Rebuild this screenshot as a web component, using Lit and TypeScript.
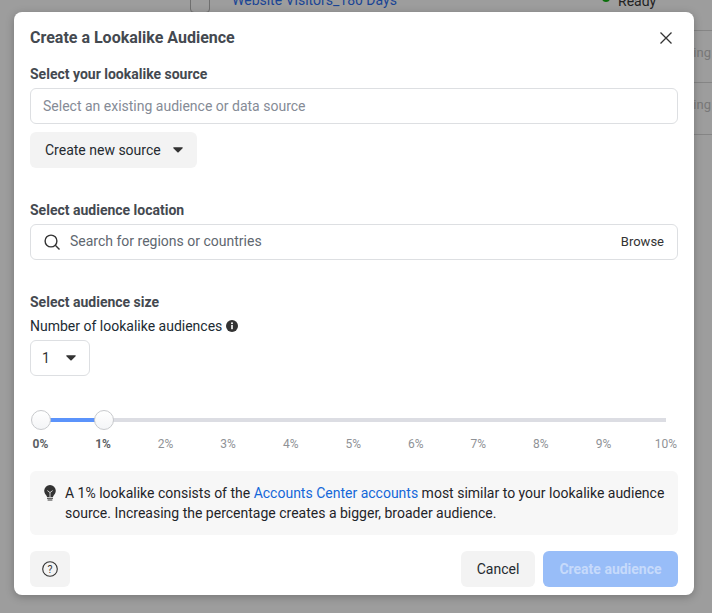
import { LitElement, html, css } from "lit";
import { customElement } from "lit/decorators.js";

const caret = html`<svg class="caret" width="10" height="6" viewBox="0 0 10 6"><path d="M.9.2h8.2c.6 0 .9.7.5 1.1L5.6 5.3c-.3.3-.9.3-1.2 0L.4 1.3C0 .9.3.2.9.2z" fill="#333"/></svg>`;
const ticks = ["0%", "1%", "2%", "3%", "4%", "5%", "6%", "7%", "8%", "9%", "10%"];

@customElement("app-root")
export class AppRoot extends LitElement {
  static styles = css`
    :host { display: block; position: relative; width: 712px; height: 613px; overflow: hidden; background: #9d9d9d; font-family: Roboto, "Liberation Sans", sans-serif; font-size: 14px; color: #1c2b33; }
    .bg { position: absolute; inset: 0; color: #555; }
    .bg .cb { position: absolute; left: 190px; top: -10px; width: 18px; height: 21px; border: 1px solid #6f6f6f; border-radius: 4px; }
    .bg .link { position: absolute; left: 232px; top: -8px; color: #1a4595; font-size: 14px; line-height: 16px; white-space: nowrap; }
    .bg .dot { position: absolute; left: 602px; top: -6px; width: 8px; height: 8px; border-radius: 50%; background: #0a6e0a; }
    .bg .ready { position: absolute; left: 618px; top: -7px; color: #222; line-height: 16px; }
    .bg .line { position: absolute; left: 694px; right: 0; height: 1px; background: #858585; }
    .bg .frag { position: absolute; left: 694px; width: 17px; overflow: hidden; color: #787878; direction: rtl; font-size: 13px; line-height: 16px; }
    .modal { position: absolute; left: 14px; top: 12px; width: 680px; height: 583px; box-sizing: border-box; padding: 0 16px; background: #fff; border-radius: 8px; box-shadow: 0 2px 8px rgba(0,0,0,.25); display: flex; flex-direction: column; }
    .head { height: 52px; flex: none; display: flex; align-items: center; justify-content: space-between; }
    h1 { margin: 0; font-size: 16px; font-weight: 700; color: #444950; line-height: 20px; }
    .close { display: block; margin-right: 6px; }
    h2 { margin: 0; font-size: 14px; font-weight: 700; color: #444950; line-height: 20px; }
    .field { height: 36px; box-sizing: border-box; border: 1px solid #dddfe2; border-radius: 6px; display: flex; align-items: center; background: #fff; color: #4b5563; }
    .src { margin-top: 4px; padding: 0 12px; color: #858b96; }
    .btn { border-radius: 6px; background: #f3f3f3; height: 36px; display: inline-flex; align-items: center; box-sizing: border-box; color: #252a30; }
    .create-src { margin-top: 8px; width: 167px; padding-left: 15px; gap: 12px; }
    .sec2 { margin-top: 32px; }
    .loc { margin-top: 4px; padding: 0 13px 0 12px; }
    .loc .ph { margin-left: 9px; flex: 1; color: #606770; position: relative; top: -1px; }
    .loc .br { color: #333; font-size: 13px; position: relative; top: -1px; }
    .sec3 { margin-top: 32px; }
    .num { margin-top: 4px; line-height: 20px; color: #1c2b33; display: flex; align-items: center; gap: 4px; }
    .btn.sel { margin-top: 4px; width: 60px; padding-left: 11px; gap: 16px; color: #333; background: #fff; }
    .slider { margin-top: 34px; height: 44px; position: relative; }
    .track { position: absolute; left: 10px; right: 12px; top: 8px; height: 4px; background: #dcdde3; }
    .fill { position: absolute; left: 0; top: 0; height: 100%; width: 63px; background: #5b93fb; }
    .thumb { position: absolute; top: 0; width: 20px; height: 20px; box-sizing: border-box; border-radius: 50%; border: 1px solid #c8cacd; background: linear-gradient(#fff, #f4f5f7); }
    .tick { position: absolute; top: 27px; width: 40px; margin-left: -20px; text-align: center; font-size: 12px; line-height: 14px; color: #8f9296; }
    .tick.on { color: #5c5f64; font-weight: 700; }
    .tip { margin-top: 17px; height: 64px; box-sizing: border-box; padding: 12px 12px 0 14px; background: #f7f7f7; border-radius: 6px; display: flex; gap: 9px; line-height: 20px; color: #1f2429; }
    .tip a { color: #1467d9; text-decoration: none; }
    .tip svg { flex: none; margin-top: 2px; }
    .foot { margin-top: 16px; display: flex; align-items: center; gap: 8px; }
    .help { width: 40px; justify-content: center; margin-right: auto; }
    .cancel { width: 74px; justify-content: center; }
    .go { width: 135px; justify-content: center; background: #98bdf8; color: #c6dafb; font-weight: 700; }
  `;

  render() {
    return html`
      <div class="bg">
        <span class="cb"></span>
        <span class="link">Website Visitors_180 Days</span>
        <span class="dot"></span><span class="ready">Ready</span>
        <span class="line" style="top:30px"></span>
        <span class="line" style="top:82px"></span>
        <span class="line" style="top:134px"></span>
        <span class="frag" style="top:45px">ting</span>
        <span class="frag" style="top:97px">ting</span>
      </div>
      <div class="modal">
        <div class="head">
          <h1>Create a Lookalike Audience</h1>
          <svg class="close" width="12" height="12" viewBox="0 0 12 12"><path d="M.5.5l11 11M11.5.5l-11 11" stroke="#333" stroke-width="1.3" fill="none"/></svg>
        </div>
        <h2>Select your lookalike source</h2>
        <div class="field src">Select an existing audience or data source</div>
        <div><div class="btn create-src">Create new source ${caret}</div></div>
        <h2 class="sec2">Select audience location</h2>
        <div class="field loc">
          <svg width="18" height="18" viewBox="0 0 18 18"><circle cx="8" cy="8" r="5.9" fill="none" stroke="#333" stroke-width="1.4"/><path d="M12.3 12.3l4.2 4.2" stroke="#333" stroke-width="1.4"/></svg>
          <span class="ph">Search for regions or countries</span>
          <span class="br">Browse</span>
        </div>
        <h2 class="sec3">Select audience size</h2>
        <div class="num">Number of lookalike audiences
          <svg width="12" height="12" viewBox="0 0 12 12"><circle cx="6" cy="6" r="6" fill="#333"/><rect x="5.2" y="5" width="1.6" height="4.2" fill="#fff"/><circle cx="6" cy="3.3" r="1" fill="#fff"/></svg>
        </div>
        <div><div class="btn field sel">1 ${caret}</div></div>
        <div class="slider">
          <div class="track"><div class="fill"></div></div>
          <div class="thumb" style="left:1px"></div>
          <div class="thumb" style="left:64px"></div>
          ${ticks.map((t, i) => html`<span class="tick ${i < 2 ? "on" : ""}" style="left:${10.5 + i * 62.55}px">${t}</span>`)}
        </div>
        <div class="tip">
          <svg width="12" height="17" viewBox="0 0 12 17"><path d="M6 0a5.8 5.8 0 0 0-5.8 5.8c0 2.4 1.5 3.6 2.3 5 .2.4.4.8.5 1.2h6c.1-.4.3-.8.5-1.2.8-1.4 2.3-2.6 2.3-5A5.8 5.8 0 0 0 6 0z" fill="#333"/><path d="M3.4 5.6L6 7.6l2.6-2M6 7.6V12" stroke="#f7f7f7" stroke-width=".8" fill="none"/><path d="M3 13.2h6M3.6 15h4.8" stroke="#333" stroke-width="1.1"/></svg>
          <div>A 1% lookalike consists of the <a>Accounts Center accounts</a> most similar to your lookalike audience source. Increasing the percentage creates a bigger, broader audience.</div>
        </div>
        <div class="foot">
          <div class="btn help">
            <svg width="16" height="16" viewBox="0 0 16 16"><circle cx="8" cy="8" r="7.3" fill="none" stroke="#333" stroke-width="1.1"/><text x="8" y="11.6" text-anchor="middle" font-size="10.5" fill="#333" font-family="Roboto">?</text></svg>
          </div>
          <div class="btn cancel">Cancel</div>
          <div class="btn go">Create audience</div>
        </div>
      </div>
    `;
  }
}
